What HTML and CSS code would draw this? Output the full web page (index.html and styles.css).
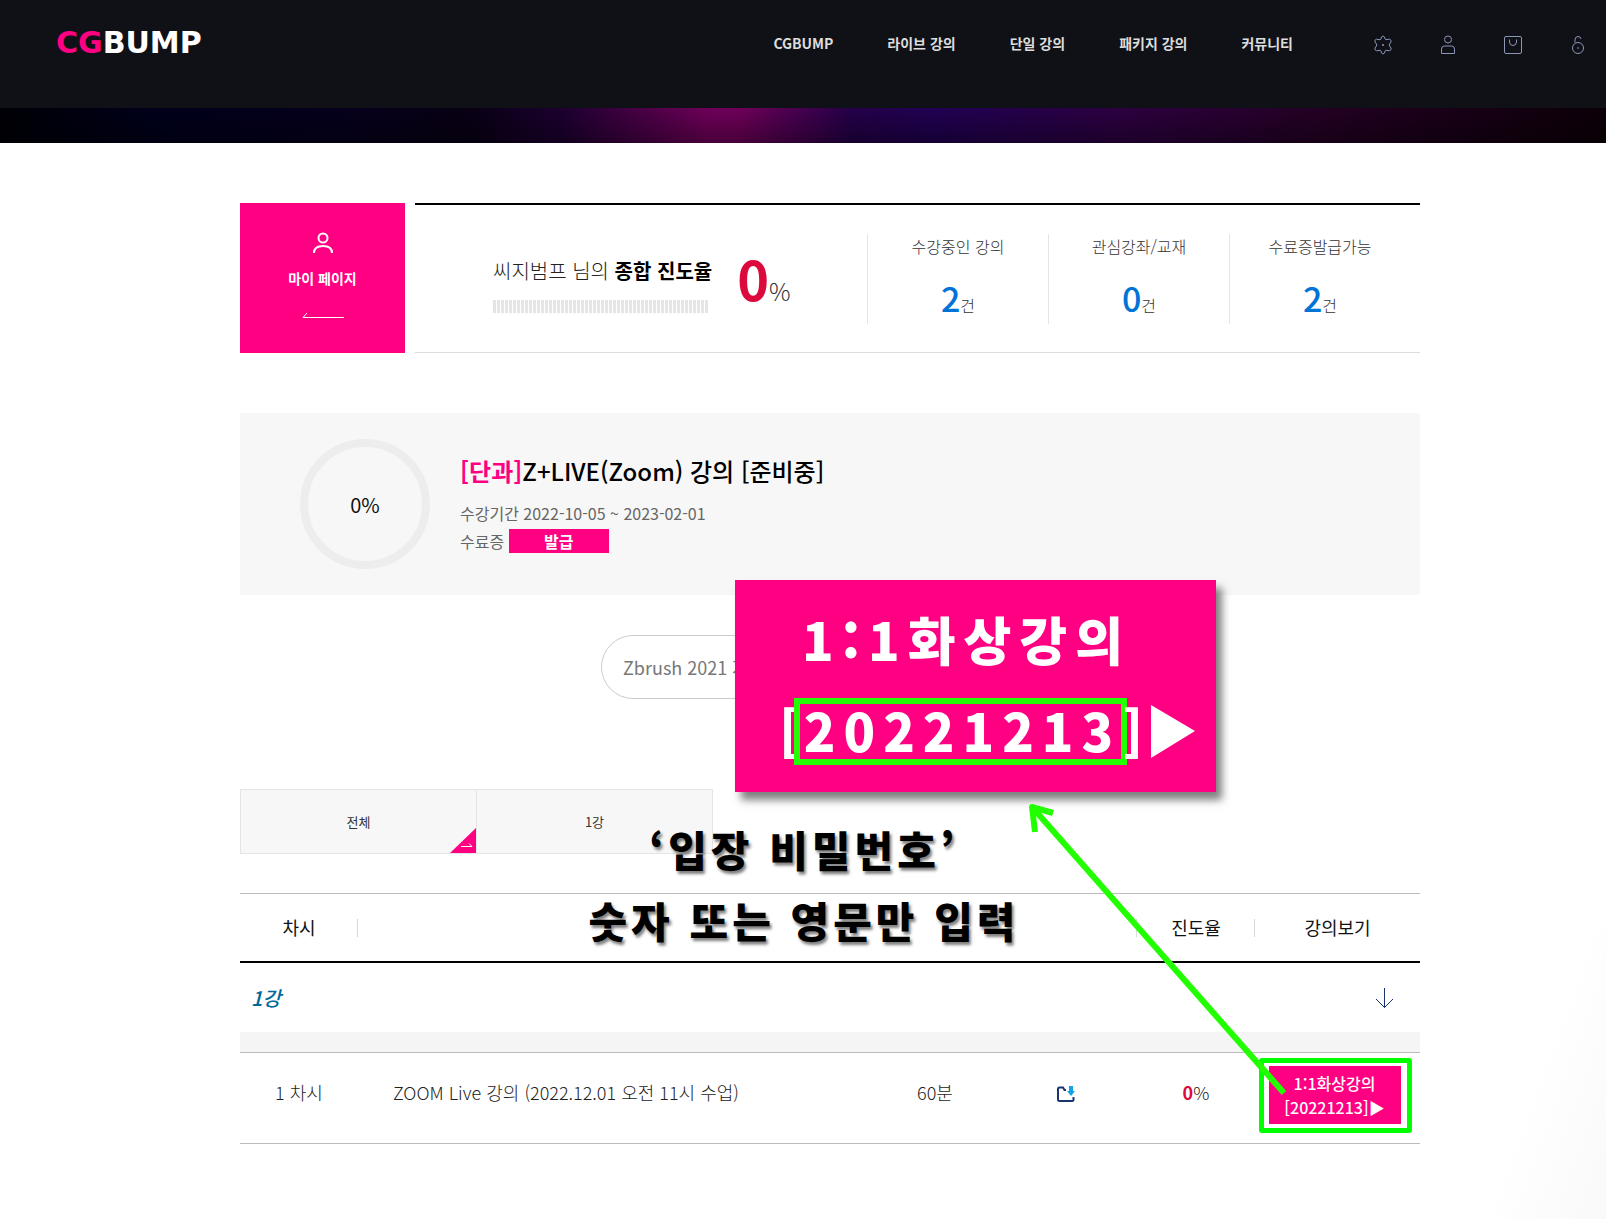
FILE: index.html
```html
<!DOCTYPE html>
<html lang="ko">
<head>
  <meta charset="UTF-8">
  <meta name="viewport" content="width=device-width, initial-scale=1.0">
  <title>CGBUMP</title>
  <link rel="stylesheet" href="styles.css">
</head>
<body>
  <header class="header">
    <a class="logo" href="#"><span>CG</span>BUMP</a>
    <nav class="nav">
      <a href="#">CGBUMP</a>
      <a href="#">라이브 강의</a>
      <a href="#">단일 강의</a>
      <a href="#">패키지 강의</a>
      <a href="#">커뮤니티</a>
    </nav>
    <div class="icons">
      <a href="#" aria-label="설정">
        <svg width="20" height="20" viewBox="0 0 20 20"><path d="M8.500 2 Q10 0 11.500 2 L12 4 Q12.600 5 14 4.600 L16.500 4.200 Q18.800 5 18 7 L16.500 9 Q16 10 16.500 11 L18 13 Q18.800 15 16.500 15.800 L14 15.400 Q12.600 15 12 16 L11.500 18 Q10 20 8.500 18 L8 16 Q7.400 15 6 15.400 L3.500 15.800 Q1.200 15 2 13 L3.500 11 Q4 10 3.500 9 L2 7 Q1.200 5 3.500 4.200 L6 4.600 Q7.400 5 8 4 Z"/><circle cx="10" cy="10" r=".7"/></svg>
      </a>
      <a href="#" aria-label="마이페이지">
        <svg width="20" height="20" viewBox="0 0 20 20"><circle cx="10" cy="4.500" r="3.500"/><path d="M3.500 18.500 V14 Q3.500 11 6.500 11 H13.500 Q16.500 11 16.500 14 V18.500 Z"/></svg>
      </a>
      <a href="#" aria-label="장바구니">
        <svg width="20" height="20" viewBox="0 0 20 20"><rect x="1.500" y="1.500" width="17" height="17" rx="1.500"/><path d="M6.500 4.500 V7 Q6.500 10.500 10 10.500 Q13.500 10.500 13.500 7 V4.500"/></svg>
      </a>
      <a href="#" aria-label="로그아웃">
        <svg width="20" height="20" viewBox="0 0 20 20"><circle cx="10" cy="13" r="5.500"/><path d="M7 7.500 V5 Q7 1.500 10 1.500 Q12.500 1.500 13 4 M10 12 V14"/></svg>
      </a>
    </div>
  </header>
  <div class="banner"></div>

  <main class="content">
    <section class="summary">
      <a class="mypage" href="#">
        <svg width="20" height="22" viewBox="0 0 20 22"><circle cx="10" cy="6" r="4.500"/><path d="M1 21 Q1 14 10 14 Q19 14 19 21"/></svg>
        <span>마이 페이지</span>
        <svg class="thin" width="42" height="6" viewBox="0 0 42 6"><path d="M5 1 L1 5.500 H42"/></svg>
      </a>
      <div class="summary-box">
        <div class="total">
          <div>
            <p class="total-name">씨지범프 님의 <b>종합 진도율</b></p>
            <div class="total-bar"></div>
          </div>
          <p class="total-num"><b>0</b>%</p>
        </div>
        <ul class="stats">
          <li>수강중인 강의<p><b>2</b>건</p></li>
          <li>관심강좌/교재<p><b>0</b>건</p></li>
          <li>수료증발급가능<p><b>2</b>건</p></li>
        </ul>
      </div>
    </section>

    <section class="course">
      <div class="circle">0%</div>
      <div>
        <h1><b>[단과]</b>Z+LIVE(Zoom) 강의 [준비중]</h1>
        <p class="meta">수강기간 2022-10-05 ~ 2023-02-01</p>
        <p class="meta">수료증 <button class="issue" type="button">발급</button></p>
      </div>
    </section>

    <select class="book" aria-label="교재">
      <option>Zbrush 2021 자막</option>
    </select>

    <div class="tabs">
      <button class="on" type="button">전체
        <svg width="26" height="25" viewBox="0 0 26 25"><path fill="#ff0082" d="M26 0 V25 H0 Z"/><path fill="none" stroke="#fff" d="M11 18.500 H22 L19 15.500"/></svg>
      </button>
      <button type="button">1강</button>
    </div>

    <table class="lessons">
      <thead>
        <tr>
          <th class="col-no line">차시</th>
          <th></th>
          <th class="col-time"></th>
          <th class="col-file line"></th>
          <th class="col-rate line">진도율</th>
          <th class="col-view">강의보기</th>
        </tr>
      </thead>
      <tbody>
        <tr class="chapter">
          <td colspan="5">1강</td>
          <td class="fold">
            <svg width="20" height="22" viewBox="0 0 20 22"><path d="M10.500 1 V20.500 M2 12 L10.500 20.500 L19 12"/></svg>
          </td>
        </tr>
        <tr class="band"><td colspan="6"></td></tr>
        <tr class="lesson">
          <td>1 차시</td>
          <td class="name">ZOOM Live 강의 (2022.12.01 오전 11시 수업)</td>
          <td>60분</td>
          <td>
            <svg width="18" height="16" viewBox="0 0 18 16"><path fill="none" stroke="#17366f" stroke-width="2" d="M9 4 H7.500 L6 1.500 H2.500 Q1 1.500 1 3 V13.500 Q1 15 2.500 15 H15 Q16.500 15 16.500 13.500 V11"/><path fill="#12a5e0" d="M12 0 H16 V5 H18 L14 10 L10 5 H12 Z"/></svg>
          </td>
          <td><b>0</b>%</td>
          <td class="view"><button class="live" type="button">1:1화상강의<br>[20221213]▶</button></td>
        </tr>
      </tbody>
    </table>

    <!-- 입장 비밀번호 안내 -->
    <div class="guide">
      <div class="popup">
        <p>1:1화상강의</p>
        <p class="popup-code">[<span>20221213</span>]<svg width="44" height="53" viewBox="0 0 44 53"><path fill="#fff" d="M0 0 L44 26 L0 53 Z"/></svg></p>
      </div>
      <p class="tip">‘입장 비밀번호’<br>숫자 또는 영문만 입력</p>
      <div class="frame"></div>
      <svg class="arrow" width="270" height="300" viewBox="0 0 270 300"><path d="M258 292 L6 6 M27 12 L6 6 L9 31"/></svg>
    </div>
  </main>
</body>
</html>
```

FILE: styles.css
```css
* {
  box-sizing: border-box;
}

body {
  margin: 0;
  min-height: 100vh;
  font-family: "Noto Sans CJK KR", sans-serif;
  font-size: 16px;
  font-weight: 300;
  line-height: 24px;
  color: #333;
  background: #fff linear-gradient(110deg, #fff 94%, #f9f9f9);
}

p, ul, h1 {
  margin: 0;
  padding: 0;
}

a {
  color: inherit;
  text-decoration: none;
}

button {
  border: 0;
  font-family: inherit;
  cursor: pointer;
}

svg {
  display: block;
}

/* header */
.header {
  display: flex;
  align-items: flex-start;
  height: 108px;
  padding: 31px 18px 0 56px;
  background: #101116;
}

.logo {
  margin-right: auto;
  font-family: "DejaVu Sans", sans-serif;
  font-size: 30px;
  font-weight: bold;
  color: #fff;
}

.logo span {
  color: #ff0082;
}

.nav {
  display: flex;
  gap: 54px;
  margin-right: 80px;
  font-size: 14px;
  font-weight: 700;
  color: #ddd;
}

.icons {
  display: flex;
  gap: 45px;
  padding-top: 4px;
}

.icons svg {
  fill: none;
  stroke: #8a95b8;
}

.banner {
  height: 35px;
  background:
    linear-gradient(rgba(0, 0, 0, 0), rgba(0, 0, 0, .35)),
    linear-gradient(90deg, #000006, #00001c 10%, #06001c 22%, #080014 29%, #1c0030 35%, #6e0058 44%, #6e0058 46%, #240048 53%, #200052 58%, #2c0040 70%, #240024 82%, #0c0008);
}

.content {
  position: relative;
  padding: 60px 186px 75px 240px;
}

/* summary */
.summary {
  display: flex;
  gap: 10px;
  height: 150px;
}

.mypage {
  display: flex;
  flex-direction: column;
  align-items: center;
  width: 165px;
  padding-top: 29px;
  font-size: 14px;
  font-weight: 700;
  color: #fff;
  background: #ff0082;
}

.mypage svg {
  fill: none;
  stroke: #fff;
  stroke-width: 2;
}

.mypage span {
  margin: 12px 0 22px;
}

.mypage .thin {
  stroke-width: 1;
}

.summary-box {
  display: flex;
  flex: 1;
  align-items: center;
  border-top: 2px solid #000;
  border-bottom: 1px solid #ddd;
}

.total {
  display: flex;
  flex: 1;
  gap: 25px;
  padding: 12px 0 0 78px;
}

.total-name {
  margin-top: 6px;
  font-size: 20px;
  line-height: 30px;
  color: #222;
}

.total-name b {
  font-weight: 700;
  color: #000;
}

.total-bar {
  width: 215px;
  height: 13px;
  margin-top: 14px;
  background: repeating-linear-gradient(90deg, #e5e5e5 0 3px, #fff 3px 4px);
}

.total-num {
  font-size: 24px;
  line-height: 56px;
}

.total-num b {
  font-size: 54px;
  font-weight: 700;
  color: #dc0a3c;
}

.stats {
  display: flex;
  padding-right: 10px;
  list-style: none;
  text-align: center;
}

.stats li {
  width: 181px;
  height: 90px;
  border-left: 1px solid #e5e5e5;
}

.stats p {
  margin-top: 16px;
  line-height: 48px;
}

.stats b {
  font-size: 34px;
  font-weight: 500;
  color: #0073d7;
}

/* course */
.course {
  display: flex;
  gap: 30px;
  height: 182px;
  margin-top: 60px;
  padding: 26px 60px;
  background: #f7f7f7;
}

.circle {
  width: 130px;
  height: 130px;
  border: 8px solid #ededed;
  border-radius: 50%;
  font-size: 20px;
  font-weight: 400;
  line-height: 116px;
  text-align: center;
  color: #111;
}

.course h1 {
  margin: 14px 0 12px;
  font-size: 24px;
  font-weight: 500;
  line-height: 36px;
  color: #000;
}

.course h1 b {
  font-weight: 700;
  color: #ff0082;
}

.meta {
  margin-bottom: 4px;
  font-weight: 400;
  color: #666;
}

.issue {
  width: 100px;
  height: 24px;
  padding: 0;
  font-size: 16px;
  font-weight: 700;
  line-height: 24px;
  color: #fff;
  background: #ff0082;
}

.book {
  display: block;
  width: 458px;
  height: 64px;
  margin: 40px auto 90px;
  padding: 0 21px;
  border: 1px solid #ccc;
  border-radius: 32px;
  font-family: inherit;
  font-size: 18px;
  color: #777;
  background: #fff;
  appearance: none;
}

/* tabs */
.tabs {
  display: flex;
}

.tabs button {
  position: relative;
  width: 237px;
  height: 65px;
  border: 1px solid #e5e5e5;
  font-size: 13px;
  color: #333;
  background: #f7f7f7;
}

.tabs button + button {
  width: 236px;
  border-left: 0;
}

.tabs svg {
  position: absolute;
  right: 0;
  bottom: 0;
}

/* lessons */
.lessons {
  width: 100%;
  margin-top: 39px;
  border-collapse: separate;
  border-spacing: 0;
  table-layout: fixed;
  font-size: 18px;
  text-align: center;
  color: #222;
}

.lessons th,
.lessons td {
  padding: 0;
}

.lessons th {
  height: 70px;
  padding-bottom: 2px;
  border-top: 1px solid #bbb;
  border-bottom: 2px solid #000;
  font-weight: 400;
  color: #111;
}

.line {
  background: linear-gradient(#d8d8d8, #d8d8d8) no-repeat right center / 1px 18px;
}

.col-no {
  width: 118px;
}

.col-time {
  width: 118px;
}

.col-file {
  width: 143px;
}

.col-rate {
  width: 118px;
}

.col-view {
  width: 165px;
}

.chapter td {
  height: 69px;
  padding-left: 11px;
  font-size: 20px;
  font-style: italic;
  font-weight: 500;
  text-align: left;
  color: #00699b;
}

.chapter .fold {
  padding-left: 119px;
}

.fold svg {
  fill: none;
  stroke: #17366f;
}

.band td {
  height: 20px;
  background: #f5f5f5;
}

.lesson td {
  height: 92px;
  border-top: 1px solid #bbb;
  border-bottom: 1px solid #bbb;
  padding-bottom: 12px;
}

.lesson .name {
  padding-left: 35px;
  text-align: left;
}

.lesson svg {
  margin: 4px auto 0;
}

.lesson b {
  font-weight: 700;
  color: #dc0a3c;
}

.lesson .view {
  padding: 0 6px 6px 0;
}

.live {
  width: 132px;
  height: 58px;
  padding: 0;
  font-size: 16px;
  font-weight: 500;
  line-height: 24px;
  color: #fff;
  background: #ff0082;
}

/* guide */
.guide {
  position: absolute;
  top: 0;
  left: 0;
  color: #000;
  font-weight: 900;
  white-space: nowrap;
  pointer-events: none;
}

.popup {
  position: absolute;
  top: 437px;
  left: 735px;
  width: 481px;
  height: 212px;
  padding: 13px 0 0 67px;
  font-size: 52px;
  line-height: 92px;
  letter-spacing: 8px;
  color: #fff;
  background: #ff0082;
  box-shadow: 6px 8px 8px rgba(0, 0, 0, .5);
}

.popup-code {
  display: flex;
  align-items: center;
  margin-left: -23px;
}

.popup-code span {
  height: 67px;
  margin: 0 -5px 0 -14px;
  padding-left: 4px;
  border: 6px solid #2f0;
  line-height: 52px;
}

.tip {
  position: absolute;
  top: 670px;
  left: 588px;
  width: 432px;
  font-size: 42px;
  line-height: 71px;
  letter-spacing: 4px;
  text-align: center;
  text-shadow: 2px 3px 3px rgba(0, 0, 0, .5);
}

.frame {
  position: absolute;
  top: 915px;
  left: 1259px;
  width: 153px;
  height: 75px;
  border: 5px solid #0f0;
  border-radius: 3px;
}

.arrow {
  position: absolute;
  top: 658px;
  left: 1026px;
  fill: none;
  stroke: #2f0;
  stroke-width: 6;
  stroke-linejoin: round;
}
```
